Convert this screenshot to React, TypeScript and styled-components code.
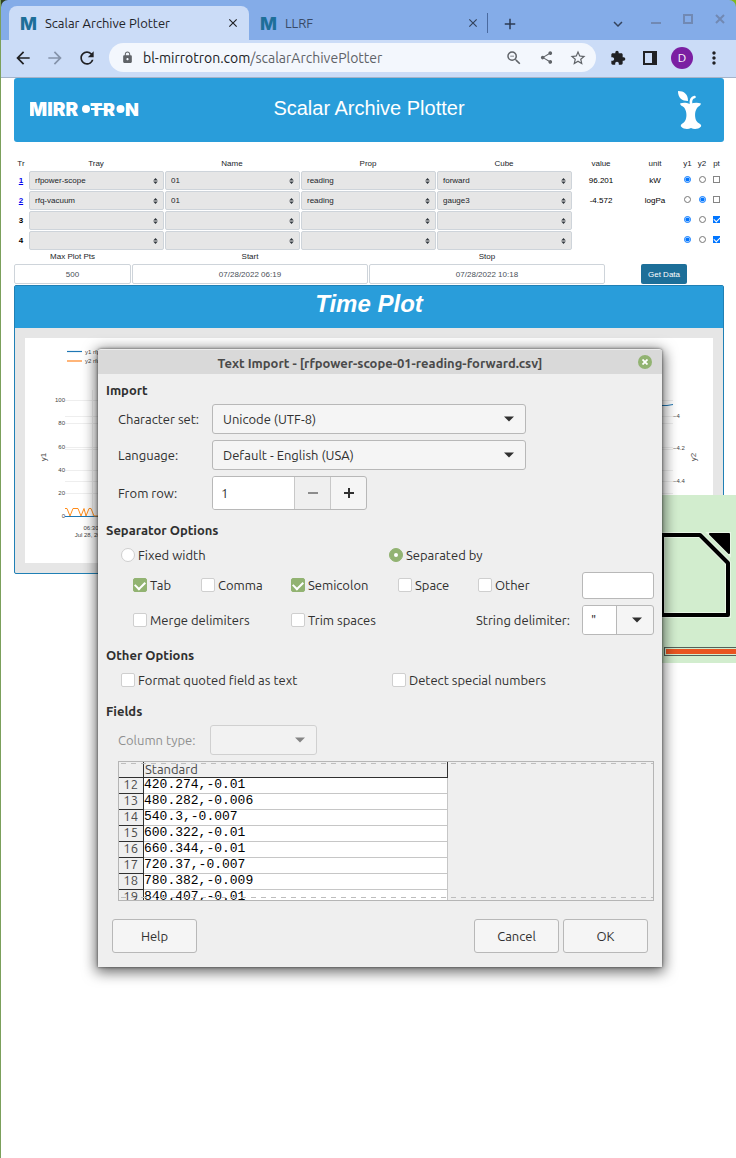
import React from "react";
import styled, { createGlobalStyle, css } from "styled-components";
import {
  MdAdd,
  MdArrowBack,
  MdArrowForward,
  MdClose,
  MdExtension,
  MdKeyboardArrowDown,
  MdLock,
  MdMoreVert,
  MdRefresh,
  MdShare,
  MdStarBorder,
  MdZoomOut,
} from "react-icons/md";

const uiFont = `Ubuntu, "Noto Sans", "Open Sans", sans-serif`;
const webFont = `"Liberation Sans", Arial, sans-serif`;
const blue = "#299dda";
const green = "#92b372";

const GlobalStyle = createGlobalStyle`
  * { box-sizing: border-box; }
  body { margin: 0; background: #fff; }
  button, input, select { font: inherit; color: inherit; margin: 0; }
  button { padding: 0; cursor: pointer; }
`;

const Desktop = styled.div`
  position: relative;
  min-height: 100vh;
  overflow: hidden;
  border-left: 1px solid #7ba05b;
`;

/* ---------- browser chrome ---------- */

const WindowFrame = styled.div`
  background: linear-gradient(90deg, #2f4020 50%, #7fb81c 50%);
`;

const TabStrip = styled.div`
  display: flex;
  align-items: flex-end;
  height: 40px;
  padding-left: 8px;
  border-radius: 7px 7px 0 0;
  background: #84ace8;
  font: 13px ${uiFont};
`;

const Tab = styled.div<{ $active?: boolean }>`
  display: flex;
  align-items: center;
  gap: 8px;
  flex: 0 1 240px;
  height: 34px;
  padding: 0 8px 0 11px;
  border-radius: 8px 8px 0 0;
  color: ${(p) => (p.$active ? "#1f2328" : "#3a4a66")};
  background: ${(p) => (p.$active ? "#cbdcf7" : "transparent")};
`;

const TabTitle = styled.span`
  flex: 1;
  white-space: nowrap;
`;

const IconButton = styled.button<{ $w?: number; $color?: string }>`
  display: flex;
  align-items: center;
  justify-content: center;
  flex: none;
  width: ${(p) => p.$w ?? 32}px;
  height: 32px;
  border: 0;
  background: none;
  color: ${(p) => p.$color ?? "#202124"};
`;

const TabDivider = styled.span`
  width: 1px;
  height: 20px;
  margin: 0 6px 7px -2px;
  background: #4a6a9f;
`;

const WindowButtons = styled.div`
  display: flex;
  margin-left: auto;
`;

const Toolbar = styled.div`
  display: flex;
  align-items: center;
  height: 38px;
  padding: 0 6px 2px;
  background: #cbdcf7;
  border-bottom: 1px solid #a5b3c9;
`;

const AddressBar = styled.div`
  display: flex;
  align-items: center;
  flex: 1;
  height: 29px;
  margin: 0 6px;
  padding: 0 2px;
  border-radius: 15px;
  background: #f3f7fd;
  color: #5f6368;
  font: 14px ${uiFont};
`;

const Address = styled.span`
  flex: 1;
  white-space: nowrap;
  b { font-weight: 400; color: #202124; }
`;

const Slot = styled.span`
  display: flex;
  justify-content: center;
  width: 32px;
`;

const Avatar = styled.span`
  width: 22px;
  height: 22px;
  border-radius: 50%;
  background: #7b1fa2;
  color: #fff;
  font: 12px/22px ${uiFont};
`;

/* ---------- web page ---------- */

const Page = styled.main`
  padding: 0 12px 0 13px;
  font: 8px ${webFont};
  color: #212529;
`;

const Banner = styled.header`
  display: grid;
  grid-template-columns: 1fr auto 1fr;
  align-items: center;
  height: 64px;
  padding: 0 16px;
  border-radius: 3px;
  background: ${blue};
  color: #fff;
  & > :last-child { justify-self: end; margin-right: 6px; }
`;

const BannerTitle = styled.h1`
  margin: 0;
  padding-bottom: 4px;
  font: 20px/24px ${webFont};
`;

const TraceTable = styled.table`
  width: 100%;
  margin-top: 15px;
  table-layout: fixed;
  border-collapse: collapse;
  text-align: center;
  th, td { height: 20px; padding: 0; font-weight: 400; }
  thead th { height: 13px; }
  td:first-child { font-weight: 700; color: #000; }
  td:nth-child(6), td:nth-child(7) { color: #000; }
  a { color: #0000ee; }
  input { display: block; margin: 0 auto 1px; width: 7px; height: 7px; }
  input[type="checkbox"] {
    appearance: none;
    display: grid;
    place-items: center;
    border: 1px solid #858585;
    background: #fff;
  }
  input[type="checkbox"]:checked { border-color: #0075ff; background: #0075ff; }
  input[type="checkbox"]:checked::before {
    content: "";
    width: 5px;
    height: 3px;
    margin-bottom: 2px;
    border: solid #fff;
    border-width: 0 0 1px 1px;
    transform: rotate(-45deg);
  }
`;

const SelectBox = styled.span`
  display: block;
  position: relative;
  margin-left: 1px;
  svg { position: absolute; right: 6px; top: 7px; pointer-events: none; }
`;

const PageSelect = styled.select`
  appearance: none;
  display: block;
  width: 100%;
  height: 19px;
  padding: 0 5px;
  border: 1px solid #ced4da;
  border-radius: 2px;
  background: #e6e6e6;
`;

const RangeForm = styled.form`
  display: grid;
  grid-template-columns: 117px 1fr 1fr 118px;
  column-gap: 1px;
  text-align: center;
`;

const RangeLabel = styled.label`
  display: flex;
  flex-direction: column;
  line-height: 14px;
`;

const RangeInput = styled.input`
  width: 100%;
  height: 20px;
  border: 1px solid #ced4da;
  border-radius: 2px;
  background: #fff;
  color: #495057;
  text-align: center;
`;

const GetData = styled.button`
  justify-self: start;
  align-self: end;
  width: 46px;
  height: 20px;
  margin-left: 35px;
  border: 0;
  border-radius: 2px;
  background: #1d6f99;
  color: #fff;
`;

const PlotCard = styled.section`
  margin-top: 1px;
  border: 1px solid #2080b5;
  border-radius: 2px;
  background: #e6e6e6;
`;

const PlotTitle = styled.h2`
  margin: 0;
  height: 42px;
  padding-bottom: 6px;
  background: ${blue};
  color: #fff;
  text-align: center;
  font: italic bold 24px/36px ${webFont};
`;

const PlotArea = styled.div`
  margin: 10px;
  background: #fff;
  svg { display: block; width: 100%; height: auto; }
`;

/* ---------- splash window ---------- */

const Splash = styled.div`
  position: absolute;
  top: 495px;
  right: 0;
  width: 176px;
  height: 168px;
  background: #d2edce;
  svg { display: block; margin: 33px 0 26px 100px; }
`;

const Progress = styled.div`
  height: 9px;
  margin-left: 104px;
  padding: 1px 0 1px 1px;
  border: 1px solid #54615a;
  border-right: 0;
  background: #d2edce;
  &::before { content: ""; display: block; height: 5px; background: #e95420; }
`;

/* ---------- import dialog ---------- */

const Dialog = styled.div`
  position: absolute;
  top: 349px;
  left: 97px;
  width: 564px;
  border-top: 1px solid #ececec;
  border-radius: 3px 3px 0 0;
  background: #efefef;
  box-shadow: 0 0 3px rgba(0, 0, 0, 0.6), 0 3px 14px 2px rgba(0, 0, 0, 0.6);
  color: #303030;
  font: 13px/20px ${uiFont};
`;

const TitleBar = styled.div`
  display: grid;
  grid-template-columns: 24px 1fr 24px;
  align-items: center;
  height: 24px;
  padding: 2px 5px 0;
  background: #d9d9d9;
  color: #4a4a4a;
  text-align: center;
  font-weight: 600;
  white-space: nowrap;
`;

const CloseButton = styled.button`
  display: flex;
  align-items: center;
  justify-content: center;
  justify-self: center;
  width: 14px;
  height: 14px;
  margin-bottom: 2px;
  border: 0;
  border-radius: 50%;
  background: ${green};
  color: #fff;
`;

const DialogBody = styled.form`
  padding: 6px 8px 14px;
`;

const Heading = styled.h3<{ $gap?: number }>`
  margin: ${(p) => p.$gap ?? 0}px 0 4px;
  font: bold 13px/20px ${uiFont};
`;

const Fields = styled.div`
  display: grid;
  grid-template-columns: 94px 314px;
  row-gap: 6px;
  align-items: center;
  padding-left: 12px;
`;

const boxed = css`
  border: 1px solid #b8b8b8;
  border-radius: 3px;
  background: #f5f5f5;
`;

const Combo = styled.span<{ $dim?: boolean }>`
  position: relative;
  display: block;
  opacity: ${(p) => (p.$dim ? 0.55 : 1)};
  select {
    ${boxed}
    appearance: none;
    display: block;
    width: 100%;
    height: 30px;
    padding: 0 10px;
    opacity: 1;
  }
  svg { position: absolute; right: 12px; top: 12px; pointer-events: none; }
`;

const Spin = styled.span`
  ${boxed}
  display: flex;
  width: 155px;
  height: 34px;
  overflow: hidden;
  input { flex: 1; min-width: 0; border: 0; padding: 0 8px; background: #fff; }
  button { width: 36px; border: 0; border-left: 1px solid #c8c8c8; background: none; }
  button:disabled { color: #8c8c8c; background: #efefef; }
  svg { display: block; margin: 0 auto; }
`;

const Options = styled.div<{ $second: number }>`
  display: grid;
  grid-template-columns: ${(p) => p.$second}px 1fr;
  padding: 1px 0 0 15px;
`;

const Choice = styled.label`
  display: flex;
  align-items: center;
  gap: 3px;
  white-space: nowrap;
  input {
    appearance: none;
    display: grid;
    place-items: center;
    width: 14px;
    height: 14px;
    border: 1px solid #cfcfcf;
    border-radius: 2px;
    background: #fff;
  }
  input[type="radio"] { border-radius: 50%; }
  input:checked { border-color: ${green}; background: ${green}; }
  input[type="radio"]:checked::before {
    content: "";
    width: 4px;
    height: 4px;
    border-radius: 50%;
    background: #fff;
  }
  input[type="checkbox"]:checked::before {
    content: "";
    width: 8px;
    height: 5px;
    margin-bottom: 2px;
    border: solid #fff;
    border-width: 0 0 2px 2px;
    transform: rotate(-45deg);
  }
`;

const Separators = styled.div`
  display: grid;
  grid-template-columns: 68px 90px 107px 80px 104px 72px;
  grid-template-rows: 26px 30px;
  gap: 7px 0;
  align-items: center;
  padding: 7px 0 0 27px;
`;

const Span2 = styled.div`
  grid-column: span 2;
`;

const DelimiterLabel = styled.label`
  grid-column: span 2;
  padding-right: 12px;
  text-align: right;
`;

const TextBox = styled.input`
  ${boxed}
  width: 100%;
  height: 27px;
  background: #fff;
`;

const DelimiterBox = styled.span`
  ${boxed}
  display: flex;
  height: 30px;
  overflow: hidden;
  input { width: 34px; padding: 0 8px; border: 0; border-right: 1px solid #b8b8b8; background: #fff; }
  button { flex: 1; padding-left: 4px; border: 0; background: none; }
  svg { display: block; margin: 0 auto; }
`;

const ColumnType = styled.div`
  display: grid;
  grid-template-columns: 92px 107px;
  align-items: center;
  padding-left: 12px;
  color: #8f8f8f;
`;

const Preview = styled.div`
  position: relative;
  height: 140px;
  margin: 6px 0 0 12px;
  overflow: hidden;
  border: 1px solid #b5b5b5;
  &::before, &::after {
    content: "";
    position: absolute;
    left: 2px;
    right: 0;
    height: 1px;
    background: repeating-linear-gradient(90deg, #bdbdbd 0 5px, transparent 5px 10px);
  }
  &::before { top: 1px; }
  &::after { bottom: 2px; }
`;

const PreviewTable = styled.table`
  width: 329px;
  table-layout: fixed;
  border-collapse: separate;
  border-spacing: 0;
  th, td { height: 16px; padding: 0; text-align: left; font-weight: 400; }
  th {
    color: #4a4a4a;
    line-height: 15px;
    border-bottom: 1px solid #303030;
    border-right: 1px solid #303030;
  }
  thead th:last-child { padding-left: 1px; }
  tbody th { padding: 0 5px 2px 0; line-height: 13px; text-align: right; }
  td {
    padding-bottom: 2px;
    border-bottom: 1px solid #c6c6c6;
    border-right: 1px solid #c6c6c6;
    background: #fff;
    color: #000;
    font: 13px/13px "Liberation Mono", monospace;
  }
`;

const Actions = styled.div`
  display: flex;
  gap: 4px;
  margin-top: 18px;
  padding: 0 6px;
  button:first-child { margin-right: auto; }
`;

const ActionButton = styled.button`
  ${boxed}
  width: 85px;
  height: 34px;
`;

/* ---------- drawings ---------- */

const Favicon = () => (
  <svg width="17" height="26" viewBox="0 0 17 26">
    <text x="8.500" y="20" textAnchor="middle" fontFamily="Inter" fontWeight="800" fontSize="18" fill="#1d6f99">M</text>
  </svg>
);

const Logo = () => (
  <svg width="114" height="28" viewBox="0 0 114 28" fill="#fff" role="img" aria-label="Mirrotron">
    <g fontFamily="Inter, sans-serif" fontWeight="900" fontSize="18">
      <text x="-1" y="19.500" fontSize="19">MIRR</text>
      <text x="60" y="19.500">T</text>
      <text x="73" y="19.500">R</text>
      <text x="95" y="19.500">N</text>
    </g>
    <circle cx="56" cy="13" r="4" />
    <circle cx="90.500" cy="13" r="4" />
    <path d="M61 12h16v2h-16z" />
  </svg>
);

const AppleCore = () => (
  <svg width="24" height="38" viewBox="0 0 24 38" fill="#fff">
    <path d="M0 0C6 0 10 3 10 10C4 10 0 7 0 0Z" />
    <path d="M13 13C12.500 9 14 6.500 16.500 6" fill="none" stroke="#fff" strokeWidth="2.600" strokeLinecap="round" />
    <path d="M2 12.500C5 11.500 8 11.500 12 13C16 11.500 20 11.500 23 12.500C22.500 15 20.500 15 19 17C16.500 21 16.500 26 18.500 30C20 32.500 24 33 23 35.500C20 38.500 16 38.500 13 37C10 38.500 6 38.500 3 35.500C2 33 5.500 32.500 7 30C9 26 9 21 6.500 17C5 15 2.500 15 2 12.500Z" />
  </svg>
);

const UpDown = () => (
  <svg width="5" height="6" viewBox="0 0 5 6" fill="#343a40">
    <path d="M2.500 0L4.800 2.400H.2ZM2.500 6L4.800 3.600H.2Z" />
  </svg>
);

const Caret = ({ color = "#303030" }: { color?: string }) => (
  <svg width="10" height="6" viewBox="0 0 10 6" fill={color}>
    <path d="M0 .5H10L5 5.500Z" />
  </svg>
);

const WindowGlyph = ({ d }: { d: string }) => (
  <svg width="12" height="20" viewBox="0 0 12 20" fill="none" stroke="currentColor" strokeWidth="2">
    <path d={d} />
  </svg>
);

const Chart = () => (
  <svg viewBox="0 0 688 225" fontFamily="Liberation Sans, Arial, sans-serif" fontSize="6" fill="#444">
    <path
      d="M40 62.500H648M40 85.500H648M40 109.500H648M40 132.500H648M40 155.500H648M40 78.500H648M40 111.500H648M40 143.500H648M67.500 52V178"
      stroke="#eee"
      fill="none"
    />
    <path d="M42 13.500H57" stroke="#1f77b4" strokeWidth="1.200" />
    <path d="M42 23H57" stroke="#ff9d4c" strokeWidth="1.500" />
    <text x="60" y="16">y1 rfpower-scope-01-reading-forward</text>
    <text x="60" y="25">y2 rfq-vacuum-01-reading-gauge3</text>
    <g textAnchor="end">
      <text x="40" y="64">100</text>
      <text x="40" y="87">80</text>
      <text x="40" y="111">60</text>
      <text x="40" y="134">40</text>
      <text x="40" y="157">20</text>
      <text x="40" y="180">0</text>
    </g>
    <text x="648" y="80">−4</text>
    <text x="648" y="112">−4.2</text>
    <text x="648" y="145">−4.4</text>
    <text x="66" y="192" textAnchor="middle">06:30</text>
    <text x="66" y="199" textAnchor="middle">Jul 28, 2022</text>
    <text transform="translate(21 119) rotate(-90)" textAnchor="middle" fontSize="8">y1</text>
    <text transform="translate(671 119) rotate(-90)" textAnchor="middle" fontSize="8">y2</text>
    <path d="M40 178.500H648" stroke="#1f77b4" />
    <path d="M600 67L636 67.500L642 67.500L648 66.500" stroke="#1f77b4" fill="none" />
    <path
      d="M40 170.500H42L45 178L48 170.500H53L56 178L59 170.500L61 178L64 170.500H66L69 178H90"
      stroke="#ff8c1a"
      fill="none"
    />
  </svg>
);

const DocumentMark = () => (
  <svg width="76" height="93" viewBox="0 0 76 93">
    <g fill="none" stroke="#e8f6e5">
      <path d="M2 7H40L68 35V87H2Z" strokeWidth="6" />
      <path d="M50 6H69V25Z" strokeWidth="4" />
    </g>
    <path d="M2 7H40L68 35V87H2Z" fill="none" stroke="#000" strokeWidth="4" strokeLinejoin="round" />
    <path d="M50 6H69V25Z" stroke="#000" strokeWidth="2" strokeLinejoin="round" />
  </svg>
);

/* ---------- data ---------- */

const traces = [
  { id: 1, picks: ["rfpower-scope", "01", "reading", "forward"], value: "96.201", unit: "kW", axis: "y1", pt: false },
  { id: 2, picks: ["rfq-vacuum", "01", "reading", "gauge3"], value: "-4.572", unit: "logPa", axis: "y2", pt: false },
  { id: 3, picks: ["", "", "", ""], value: "", unit: "", axis: "y1", pt: true },
  { id: 4, picks: ["", "", "", ""], value: "", unit: "", axis: "y1", pt: true },
];
const pickNames = ["Tray", "Name", "Prop", "Cube"];

const previewRows: [number, string][] = [
  [12, "420.274,-0.01"],
  [13, "480.282,-0.006"],
  [14, "540.3,-0.007"],
  [15, "600.322,-0.01"],
  [16, "660.344,-0.01"],
  [17, "720.37,-0.007"],
  [18, "780.382,-0.009"],
  [19, "840.407,-0.01"],
];

function BrowserChrome() {
  return (
    <>
      <WindowFrame>
        <TabStrip>
          <Tab $active>
            <Favicon />
            <TabTitle>Scalar Archive Plotter</TabTitle>
            <IconButton $w={16} aria-label="Close tab"><MdClose size={14} /></IconButton>
          </Tab>
          <Tab>
            <Favicon />
            <TabTitle>LLRF</TabTitle>
            <IconButton $w={16} $color="#34435c" aria-label="Close tab"><MdClose size={14} /></IconButton>
          </Tab>
          <TabDivider />
          <IconButton $color="#2b3a52" aria-label="New tab"><MdAdd size={18} /></IconButton>
          <WindowButtons>
            <IconButton $w={44} $color="#34435c" aria-label="Search tabs"><MdKeyboardArrowDown size={18} /></IconButton>
            <IconButton $color="#7189b3" aria-label="Minimize"><WindowGlyph d="M1 9H11" /></IconButton>
            <IconButton $color="#7189b3" aria-label="Maximize"><WindowGlyph d="M2 1H10V9H2Z" /></IconButton>
            <IconButton $color="#7189b3" aria-label="Close window"><WindowGlyph d="M2 1L10 9M10 1L2 9" /></IconButton>
          </WindowButtons>
        </TabStrip>
      </WindowFrame>
      <Toolbar>
        <IconButton aria-label="Back"><MdArrowBack size={20} /></IconButton>
        <IconButton $color="#8593aa" aria-label="Forward"><MdArrowForward size={20} /></IconButton>
        <IconButton aria-label="Reload"><MdRefresh size={20} /></IconButton>
        <AddressBar>
          <Slot><MdLock size={13} /></Slot>
          <Address><b>bl-mirrotron.com</b>/scalarArchivePlotter</Address>
          <IconButton $color="#5f6368" aria-label="Zoom"><MdZoomOut size={18} /></IconButton>
          <IconButton $color="#5f6368" aria-label="Share"><MdShare size={15} /></IconButton>
          <IconButton $color="#5f6368" aria-label="Bookmark"><MdStarBorder size={18} /></IconButton>
        </AddressBar>
        <IconButton aria-label="Extensions"><MdExtension size={16} /></IconButton>
        <IconButton aria-label="Side panel">
          <svg width="14" height="14" viewBox="0 0 14 14"><path d="M0 0H14V14H0ZM2 2V12H9V2Z" fill="#202124" fillRule="evenodd" /></svg>
        </IconButton>
        <IconButton aria-label="Profile"><Avatar>D</Avatar></IconButton>
        <IconButton aria-label="Menu"><MdMoreVert size={20} /></IconButton>
      </Toolbar>
    </>
  );
}

function TraceControls() {
  return (
    <>
      <TraceTable>
        <colgroup>
          <col style={{ width: 14 }} />
          <col /><col /><col /><col />
          <col style={{ width: 58 }} />
          <col style={{ width: 50 }} />
          <col style={{ width: 15 }} />
          <col style={{ width: 14 }} />
          <col style={{ width: 15 }} />
        </colgroup>
        <thead>
          <tr>
            {["Tr", ...pickNames, "value", "unit", "y1", "y2", "pt"].map((h) => <th key={h}>{h}</th>)}
          </tr>
        </thead>
        <tbody>
          {traces.map((t) => (
            <tr key={t.id}>
              <td>{t.value ? <a href={`#trace-${t.id}`}>{t.id}</a> : t.id}</td>
              {t.picks.map((p, i) => (
                <td key={i}>
                  <SelectBox>
                    <PageSelect aria-label={`${pickNames[i]} ${t.id}`}><option>{p}</option></PageSelect>
                    <UpDown />
                  </SelectBox>
                </td>
              ))}
              <td>{t.value}</td>
              <td>{t.unit}</td>
              <td><input type="radio" name={`axis${t.id}`} aria-label="y1" defaultChecked={t.axis === "y1"} /></td>
              <td><input type="radio" name={`axis${t.id}`} aria-label="y2" defaultChecked={t.axis === "y2"} /></td>
              <td><input type="checkbox" aria-label="pt" defaultChecked={t.pt} /></td>
            </tr>
          ))}
        </tbody>
      </TraceTable>
      <RangeForm>
        <RangeLabel>Max Plot Pts<RangeInput defaultValue="500" /></RangeLabel>
        <RangeLabel>Start<RangeInput defaultValue="07/28/2022 06:19" /></RangeLabel>
        <RangeLabel>Stop<RangeInput defaultValue="07/28/2022 10:18" /></RangeLabel>
        <GetData type="button">Get Data</GetData>
      </RangeForm>
    </>
  );
}

const Check = ({ label, on, kind = "checkbox" }: { label: string; on?: boolean; kind?: "checkbox" | "radio" }) => (
  <Choice>
    <input type={kind} name={kind === "radio" ? "mode" : undefined} defaultChecked={on} />
    {label}
  </Choice>
);

function ImportDialog() {
  return (
    <Dialog role="dialog" aria-labelledby="dialog-title">
      <TitleBar>
        <span />
        <span id="dialog-title">Text Import - [rfpower-scope-01-reading-forward.csv]</span>
        <CloseButton aria-label="Close">
          <svg width="6" height="6" viewBox="0 0 6 6"><path d="M.5 .5L5.500 5.500M5.500 .5L.5 5.500" stroke="#fff" strokeWidth="1.800" /></svg>
        </CloseButton>
      </TitleBar>
      <DialogBody>
        <Heading>Import</Heading>
        <Fields>
          <label htmlFor="charset">Character set:</label>
          <Combo><select id="charset"><option>Unicode (UTF-8)</option></select><Caret /></Combo>
          <label htmlFor="language">Language:</label>
          <Combo><select id="language"><option>Default - English (USA)</option></select><Caret /></Combo>
          <label htmlFor="row">From row:</label>
          <Spin>
            <input id="row" defaultValue="1" />
            <button type="button" disabled aria-label="Decrease">
              <svg width="10" height="10" viewBox="0 0 10 10"><path d="M0 5H10" stroke="currentColor" strokeWidth="2" /></svg>
            </button>
            <button type="button" aria-label="Increase">
              <svg width="10" height="10" viewBox="0 0 10 10"><path d="M0 5H10M5 0V10" stroke="currentColor" strokeWidth="2" /></svg>
            </button>
          </Spin>
        </Fields>

        <Heading $gap={10}>Separator Options</Heading>
        <Options $second={268}>
          <Check kind="radio" label="Fixed width" />
          <Check kind="radio" label="Separated by" on />
        </Options>
        <Separators>
          <Check label="Tab" on />
          <Check label="Comma" />
          <Check label="Semicolon" on />
          <Check label="Space" />
          <Check label="Other" />
          <TextBox aria-label="Other separator" />
          <Span2><Check label="Merge delimiters" /></Span2>
          <Check label="Trim spaces" />
          <DelimiterLabel htmlFor="delimiter">String delimiter:</DelimiterLabel>
          <DelimiterBox>
            <input id="delimiter" defaultValue={'"'} />
            <button type="button" aria-label="Choose delimiter"><Caret /></button>
          </DelimiterBox>
        </Separators>

        <Heading $gap={10}>Other Options</Heading>
        <Options $second={271}>
          <Check label="Format quoted field as text" />
          <Check label="Detect special numbers" />
        </Options>

        <Heading $gap={11}>Fields</Heading>
        <ColumnType>
          <label htmlFor="column">Column type:</label>
          <Combo $dim><select id="column" disabled><option></option></select><Caret /></Combo>
        </ColumnType>
        <Preview>
          <PreviewTable>
            <colgroup><col style={{ width: 25 }} /><col /></colgroup>
            <thead><tr><th /><th>Standard</th></tr></thead>
            <tbody>
              {previewRows.map(([n, text]) => <tr key={n}><th>{n}</th><td>{text}</td></tr>)}
            </tbody>
          </PreviewTable>
        </Preview>
        <Actions>
          <ActionButton type="button">Help</ActionButton>
          <ActionButton type="button">Cancel</ActionButton>
          <ActionButton type="button">OK</ActionButton>
        </Actions>
      </DialogBody>
    </Dialog>
  );
}

export default function App() {
  return (
    <Desktop>
      <GlobalStyle />
      <BrowserChrome />
      <Page>
        <Banner>
          <Logo />
          <BannerTitle>Scalar Archive Plotter</BannerTitle>
          <AppleCore />
        </Banner>
        <TraceControls />
        <PlotCard>
          <PlotTitle>Time Plot</PlotTitle>
          <PlotArea><Chart /></PlotArea>
        </PlotCard>
      </Page>
      <Splash>
        <DocumentMark />
        <Progress />
      </Splash>
      <ImportDialog />
    </Desktop>
  );
}
